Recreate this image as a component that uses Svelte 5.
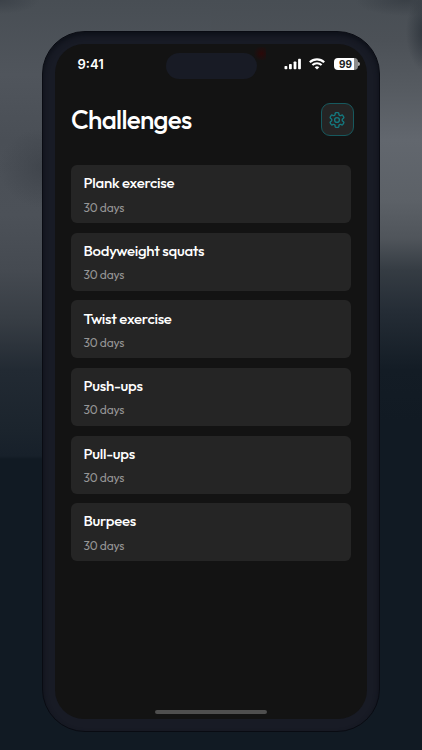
<script>
    const challenges = [
        { title: "Plank exercise", days: 30 },
        { title: "Bodyweight squats", days: 30 },
        { title: "Twist exercise", days: 30 },
        { title: "Push-ups", days: 30 },
        { title: "Pull-ups", days: 30 },
        { title: "Burpees", days: 30 },
    ];
</script>

<main class="scene">
    <div class="phone">
        <div class="screen">
            <div class="status">
                <span class="status__time">9:41</span>
                <div class="status__icons">
                    <svg width="18" height="12" viewBox="0 0 18 12" fill="#fff">
                        <rect x="0.5" y="8" width="2.8" height="3.2" rx="0.8" />
                        <rect x="5" y="6" width="2.8" height="5.2" rx="0.8" />
                        <rect x="9.6" y="3.5" width="2.8" height="7.7" rx="0.8" />
                        <rect x="14.1" y="0.8" width="2.8" height="10.4" rx="0.8" />
                    </svg>
                    <svg class="status__wifi" width="16" height="12" viewBox="0 0 16 12" fill="none" stroke="#fff">
                        <path d="M.8 4.3C4.8 .5 11.2 .5 15.2 4.3" stroke-width="2.2" />
                        <path d="M3.4 7.1C6 4.6 10 4.6 12.6 7.1" stroke-width="2.1" />
                        <path d="M8 11.4 5.7 9.2Q8 7.2 10.3 9.2Z" fill="#fff" stroke="none" />
                    </svg>
                    <div class="battery">99</div>
                    <i class="battery__tip"></i>
                </div>
            </div>
            <div class="island"></div>
            <div class="glow"></div>

            <header class="header">
                <h1>Challenges</h1>
                <button class="settings" aria-label="Settings">
                    <svg width="18" height="18" viewBox="0 0 24 24" fill="none" stroke="currentColor" stroke-width="1.8" stroke-linejoin="round">
                        <path d="M9.6 3.1c.1-.6.6-1 1.2-1h2.4c.6 0 1.1.4 1.2 1l.2 1.7c.1.4.3.7.7.9l.5.3c.3.2.7.2 1.1.1l1.5-.6c.5-.2 1.1 0 1.4.5l1.2 2.1c.3.5.2 1.1-.3 1.5l-1.3 1c-.3.3-.4.6-.4 1v.8c0 .4.1.7.4 1l1.3 1c.5.4.6 1 .3 1.5l-1.2 2.1c-.3.5-.9.7-1.4.5l-1.5-.6c-.4-.1-.8-.1-1.1.1l-.5.3c-.4.2-.6.5-.7.9l-.2 1.7c-.1.6-.6 1-1.2 1h-2.4c-.6 0-1.1-.4-1.2-1l-.2-1.7c-.1-.4-.3-.7-.7-.9l-.5-.3c-.3-.2-.7-.2-1.1-.1l-1.5.6c-.5.2-1.1 0-1.4-.5L3 15.9c-.3-.5-.2-1.1.3-1.5l1.3-1c.3-.3.4-.6.4-1v-.8c0-.4-.1-.7-.4-1l-1.3-1c-.5-.4-.6-1-.3-1.5l1.2-2.1c.3-.5.9-.7 1.4-.5l1.5.6c.4.1.8.1 1.1-.1l.5-.3c.4-.2.6-.5.7-.9z" />
                        <circle cx="12" cy="12" r="3.2" />
                    </svg>
                </button>
            </header>

            <ul class="list">
                {#each challenges as { title, days }}
                    <li class="card">
                        <h2>{title}</h2>
                        <p>{days} days</p>
                    </li>
                {/each}
            </ul>

            <div class="home"></div>
        </div>
    </div>
</main>

<style>
    :global(body) {
        margin: 0;
        background: #111a23;
    }

    /* cloudy sky: the two sides of the phone fade out at different heights */
    .scene {
        box-sizing: border-box;
        height: 750px;
        overflow: hidden;
        padding: 30.5px 42px 0;
        font-family: Outfit, Lato, sans-serif;
        background:
            radial-gradient(ellipse 50px 16px at 405px 0, #30363d99 0%, transparent 100%),
            radial-gradient(ellipse 20px 40px at 426px 32px, #262d35cc 0%, transparent 100%),
            radial-gradient(ellipse 45px 40px at 44px 168px, #3b4047aa 0%, transparent 100%),
            radial-gradient(ellipse 40px 14px at 0 0, #3c4249 0%, transparent 100%),
            linear-gradient(#484e54 0, #4c5157 40px, #565b61 90px, #62676e 140px, #5c6167 200px, #50555b 238px, #353c43 270px, #252d36 310px, #131c25 370px, #111a23 420px) right / 50% 100% no-repeat,
            linear-gradient(#484e54 0, #50555c 75px, #4a4f56 140px, #4c5158 215px, #454a51 270px, #373d44 320px, #222a33 370px, #1b242d 430px, #17202a 456px, #111a23 459px) left / 50% 100% no-repeat;
    }

    .phone {
        box-sizing: border-box;
        height: 701px;
        padding: 12px;
        border: 1px solid #090b12;
        border-radius: 43px;
        background: #181b25;
        box-shadow: inset 0 3px 5px #0d1018;
    }

    .screen {
        position: relative;
        box-sizing: border-box;
        height: 675px;
        padding: 0 16px;
        border-radius: 29px;
        background: #131313;
    }

    .status {
        display: flex;
        justify-content: space-between;
        height: 40px;
        align-items: center;
        margin: 0 -8.5px 0 6.5px;
        color: #fff;
    }

    .status__time {
        font: 600 13px Inter, sans-serif;
    }

    .status__icons {
        display: flex;
        align-items: center;
    }

    .status__wifi {
        margin: 0 9px 0 7px;
    }

    .battery {
        width: 24px;
        height: 12px;
        border-radius: 4px;
        background: linear-gradient(90deg, #fff 84%, #8b8b8b 84%);
        color: #222;
        font: 700 10px/12px Inter, sans-serif;
        text-align: center;
    }

    .battery__tip {
        width: 1.5px;
        height: 4px;
        margin-left: 0.5px;
        border-radius: 0 2px 2px 0;
        background: #aaa;
    }

    .island {
        position: absolute;
        top: 9px;
        left: 110.5px;
        width: 91px;
        height: 26px;
        border-radius: 13px;
        background: #181b25;
    }

    .glow {
        position: absolute;
        top: 3px;
        left: 195px;
        width: 16px;
        height: 13px;
        background: radial-gradient(circle at 72% 50%, #2b0808, transparent 60%);
    }

    .header {
        display: flex;
        align-items: center;
        justify-content: space-between;
        height: 33px;
        margin: 19.6px -2.5px 29.1px 0;
    }

    h1 {
        margin: 0;
        color: #fff;
        font-size: 26px;
        font-weight: 500;
        line-height: 33px;
        letter-spacing: -0.7px;
    }

    .settings {
        display: grid;
        place-items: center;
        width: 33px;
        height: 33px;
        padding: 0;
        border: 1px solid #17595e;
        border-radius: 9px;
        background: #242424;
        color: #147a80;
    }

    .list {
        display: grid;
        gap: 9.6px;
        margin: 0;
        padding: 0;
        list-style: none;
    }

    .card {
        box-sizing: border-box;
        height: 58px;
        padding: 8.3px 12.5px;
        border-radius: 6px;
        background: #252525;
    }

    h2 {
        margin: 0;
        color: #fff;
        font-size: 15px;
        font-weight: 500;
        line-height: 19px;
        letter-spacing: -0.28px;
    }

    p {
        margin: 7.2px 0 0;
        color: #969696;
        font-size: 12px;
        font-weight: 400;
        line-height: 16px;
        letter-spacing: -0.15px;
    }

    .home {
        position: absolute;
        bottom: 5px;
        left: 100px;
        width: 112px;
        height: 4px;
        border-radius: 2px;
        background: #4f4f4f;
    }
</style>
